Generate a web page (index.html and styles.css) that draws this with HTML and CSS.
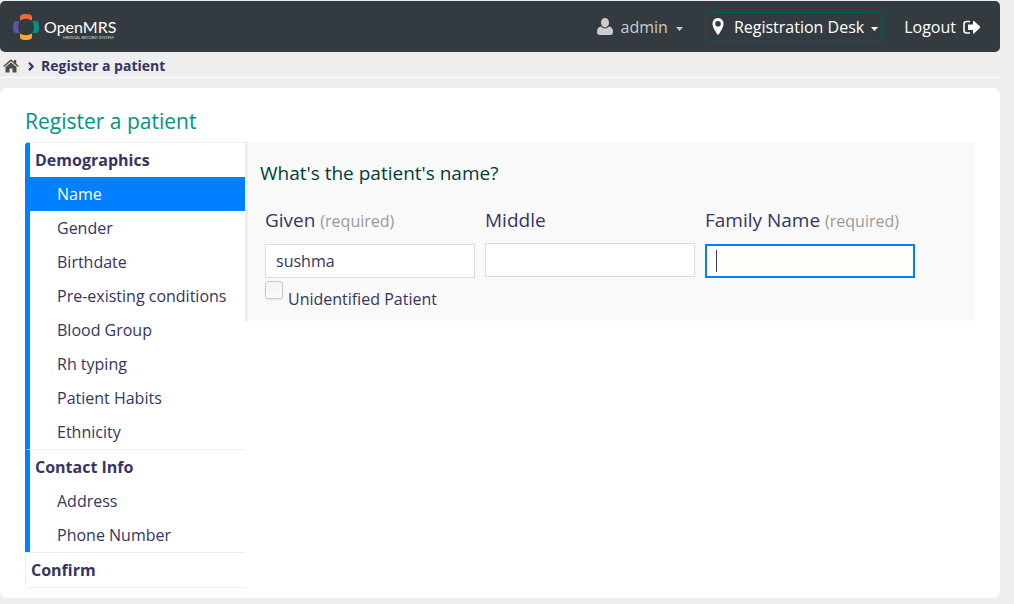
FILE: index.html
```
<!DOCTYPE html>
<html lang="en">
<head>
  <meta charset="UTF-8" />
  <meta name="viewport" content="width=device-width, initial-scale=1" />
  <title>Register a patient</title>
  <link rel="stylesheet" href="styles.css">
</head>
<body>

  <header class="top-bar">
    <a class="logo" href="#" aria-label="OpenMRS home">
      <svg width="110" height="28" viewBox="0 0 110 28">
        <path fill="#ff6633" d="M7 7.500V4Q7 2 9 1.500Q13 .5 17 1.500Q19 2 19 4V7.500Q13 4 7 7.500Z"/>
        <path fill="#009384" d="M19.500 8H23Q25 8 25.500 10Q26.500 14 25.500 18Q25 20 23 20H19.500Q22.500 14 19.500 8Z"/>
        <path fill="#f5a733" d="M7 20.500V24Q7 26 9 26.500Q13 27.500 17 26.500Q19 26 19 24V20.500Q13 24 7 20.500Z"/>
        <path fill="#5b57a2" d="M6.500 8H3Q1 8 .5 10Q-.5 14 .5 18Q1 20 3 20H6.500Q3.500 14 6.500 8Z"/>
        <text class="logo-name" x="31" y="20">OpenMRS</text>
        <text class="logo-tag" x="50" y="26">MEDICAL RECORD SYSTEM</text>
      </svg>
    </a>
    <nav class="user-options">
      <button class="account" type="button">
        <svg class="icon-user" width="16" height="18" viewBox="0 0 16 18"><path fill="currentColor" d="M8 0A4 4.500 0 0 1 12 4.500A4 5 0 0 1 8 9.500A4 5 0 0 1 4 4.500A4 4.500 0 0 1 8 0ZM4 8.500Q8 12.500 12 8.500Q16 9 16 14Q16 17 13 17H3Q0 17 0 14Q0 9 4 8.500Z"/></svg>
        admin
        <svg class="caret" width="8" height="4" viewBox="0 0 8 4"><path fill="currentColor" d="M0 0H7L3.500 4Z"/></svg>
      </button>
      <button class="location" type="button">
        <svg class="icon-pin" width="12" height="18" viewBox="0 0 12 18"><path fill="currentColor" fill-rule="evenodd" d="M6 0a5.500 5.500 0 0 1 5.500 6Q11.500 8 10 11L7 16Q6 17.500 5 16L2 11Q.5 8 .5 6A5.500 5.500 0 0 1 6 0ZM6 3a2.800 2.800 0 1 0 0 5.600A2.800 2.800 0 0 0 6 3Z"/></svg>
        Registration Desk
        <svg class="caret" width="8" height="4" viewBox="0 0 8 4"><path fill="currentColor" d="M0 0H7L3.500 4Z"/></svg>
      </button>
      <a class="logout" href="#">
        Logout
        <svg width="18" height="15" viewBox="0 0 18 15"><path fill="none" stroke="currentColor" stroke-width="1.600" d="M7 1.500H3.500Q1 1.500 1 4V10.500Q1 13 3.500 13H7"/><path fill="currentColor" d="M5 4.500H10V1.500Q10 .5 11 1L17 6.600Q17.500 7.200 17 7.800L11 13.500Q10 14 10 13V10H5Z"/></svg>
      </a>
    </nav>
  </header>

  <ul class="breadcrumbs">
    <li>
      <a href="#" aria-label="Home">
        <svg width="16" height="14" viewBox="0 0 16 14"><path fill="#4d4d4d" d="M8 3.500L13.500 8V13Q13.500 13.500 13 13.500H9.500V9.500H6.500V13.500H3Q2.500 13.500 2.500 13V8Z"/><path fill="none" stroke="#4d4d4d" stroke-width="1.500" d="M.6 7.500L8 1.300L15.400 7.500"/><path fill="#4d4d4d" d="M11 1H13.200V5.500L11 3.600Z"/></svg>
      </a>
    </li>
    <li class="current">
      <svg width="6" height="9" viewBox="0 0 6 9"><path fill="none" stroke="currentColor" stroke-width="2.200" d="M1 .8L4.600 4.500L1 8.200"/></svg>
      Register a patient
    </li>
  </ul>

  <main class="content">
    <h2>Register a patient</h2>
    <div class="register">
      <ul class="form-nav">
        <li class="section doing">
          <span>Demographics</span>
          <ul>
            <li><a class="active" href="#">Name</a></li>
            <li><a href="#">Gender</a></li>
            <li><a href="#">Birthdate</a></li>
            <li><a href="#">Pre-existing conditions</a></li>
            <li><a href="#">Blood Group</a></li>
            <li><a href="#">Rh typing</a></li>
            <li><a href="#">Patient Habits</a></li>
            <li><a href="#">Ethnicity</a></li>
          </ul>
        </li>
        <li class="section doing">
          <span>Contact Info</span>
          <ul>
            <li><a href="#">Address</a></li>
            <li><a href="#">Phone Number</a></li>
          </ul>
        </li>
        <li class="section">
          <span>Confirm</span>
        </li>
      </ul>

      <form class="question">
        <h3>What's the patient's name?</h3>
        <div class="fields">
          <div class="field">
            <label for="givenName">Given <small>(required)</small></label>
            <input type="text" id="givenName" value="sushma">
          </div>
          <div class="field">
            <label for="middleName">Middle</label>
            <input type="text" id="middleName">
          </div>
          <div class="field">
            <label for="familyName">Family Name <small>(required)</small></label>
            <input type="text" id="familyName" placeholder=" " autofocus>
          </div>
        </div>
        <div class="unidentified">
          <input type="checkbox" id="unknownPatient">
          <label for="unknownPatient">Unidentified Patient</label>
        </div>
      </form>
    </div>
  </main>

</body>
</html>
```

FILE: styles.css
```
* {
  margin: 0;
  padding: 0;
  box-sizing: border-box;
}
body {
  padding: 1px 14px 6px 0;
  background: #eee;
  color: #363463;
  font-family: "Open Sans", sans-serif;
  font-size: 16px;
  line-height: 24px;
}
ul {
  list-style: none;
}
a {
  color: inherit;
  text-decoration: none;
}
button, input {
  font: inherit;
  color: inherit;
}
svg {
  display: block;
}

/* header */
.top-bar {
  display: flex;
  align-items: center;
  justify-content: space-between;
  padding: 11px 19px 10px 13px;
  background: #343b40;
  color: #fff;
  border-radius: 5px;
}
.logo-name {
  font-family: Lato, sans-serif;
  font-size: 16px;
  fill: #fff;
}
.logo-tag {
  font-family: Lato, sans-serif;
  font-size: 4px;
  fill: #ddd;
}
.user-options {
  display: flex;
  align-items: center;
  gap: 21px;
}
.user-options button {
  display: flex;
  align-items: center;
  background: none;
  border: none;
  cursor: pointer;
}
.user-options .account {
  gap: 8px;
  color: #ccc;
}
.user-options .location {
  gap: 7px;
  padding: 2px 3px 2px 6px;
  border: 1px solid #005b51;
  border-radius: 4px;
}
.icon-pin {
  margin-right: 3px;
}
.caret {
  margin-top: 4px;
}
.logout {
  display: flex;
  align-items: center;
  gap: 7px;
}

/* breadcrumbs */
.breadcrumbs {
  display: flex;
  align-items: center;
  gap: 9px;
  padding: 3px 3px 0;
  border-bottom: 1px solid #fff;
  font-size: 14px;
  line-height: 22px;
}
.breadcrumbs .current {
  display: flex;
  align-items: center;
  gap: 7px;
  font-weight: bold;
}

/* page */
.content {
  margin-top: 10px;
  padding: 18px 25px 10px;
  background: #fff;
  border-radius: 7px;
}
h2 {
  margin-bottom: 6px;
  color: #009384;
  font-size: 21px;
  font-weight: normal;
  line-height: 30px;
}
.register {
  display: flex;
  align-items: flex-start;
}

/* section list */
.form-nav {
  flex: 0 0 220px;
  border-bottom: 1px solid #eee;
  border-radius: 4px 0 0 4px;
  overflow: hidden;
  line-height: 34px;
}
.section {
  border-top: 1px solid #eee;
  border-left: 1px solid #eee;
}
.section.doing {
  border-left: 5px solid #007fff;
}
.section > span {
  display: block;
  padding-left: 5px;
  font-weight: bold;
}
.section a {
  display: block;
  padding-left: 27px;
}
.section a.active {
  background: #007fff;
  color: #fff;
}

/* question */
.question {
  flex: 1;
  padding: 16px 12px 10px;
  background: #f9f9f9;
  border-left: 3px solid #eee;
}
h3 {
  margin-bottom: 18px;
  color: #003f38;
  font-size: 19px;
  font-weight: normal;
  line-height: 30px;
}
.fields {
  display: flex;
  flex-wrap: wrap;
  gap: 10px;
  padding-left: 5px;
}
.field {
  width: 210px;
}
.field label {
  display: block;
  margin-bottom: 9px;
  font-size: 19px;
  line-height: 28px;
  white-space: nowrap;
}
.field small {
  color: #999;
  font-size: 16px;
}
.field input {
  display: block;
  width: 100%;
  height: 34px;
  padding: 5px 10px;
  background: #fff;
  border: 1px solid #ddd;
}
.field input:focus {
  padding: 4px 9px;
  background: #fffefa;
  border: 2px solid #007fff;
  outline: none;
}
/* steady cursor while the focused field is empty */
.field input:focus:placeholder-shown {
  background: linear-gradient(#363463, #363463) 9px 4px / 1px 22px no-repeat #fffefa;
  caret-color: transparent;
}
.unidentified {
  display: flex;
  align-items: flex-start;
  gap: 5px;
  padding: 3px 0 0 5px;
}
.unidentified input {
  appearance: none;
  width: 18px;
  height: 18px;
  background: linear-gradient(#f3f3f3, #fafafa);
  border: 1px solid #c8cccf;
  border-radius: 3px;
  box-shadow: 0 1px 2px rgba(0,0,0,0.08);
}
.unidentified label {
  padding-top: 6px;
}
```
